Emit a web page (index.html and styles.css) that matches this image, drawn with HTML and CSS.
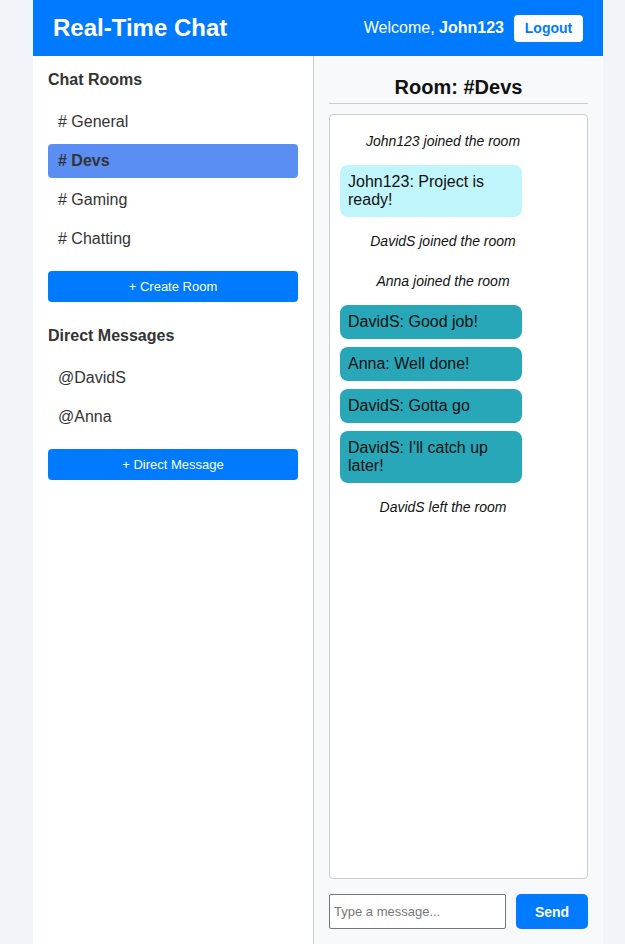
FILE: index.html
```html
<!DOCTYPE html>
<html lang="en">
<head>
<meta charset="utf-8">
<title>Real-Time Chat</title>
<link rel="stylesheet" href="styles.css">
</head>
<body>
<div class="app">
  <header class="topbar">
    <h1 class="brand">Real-Time Chat</h1>
    <div class="user">
      <span class="welcome">Welcome, <strong>John123</strong></span>
      <button class="logout">Logout</button>
    </div>
  </header>
  <div class="main">
    <aside class="sidebar">
      <h3 class="side-title">Chat Rooms</h3>
      <ul class="list">
        <li class="item"># General</li>
        <li class="item active"># Devs</li>
        <li class="item"># Gaming</li>
        <li class="item"># Chatting</li>
      </ul>
      <button class="side-btn">+ Create Room</button>
      <h3 class="side-title dm-title">Direct Messages</h3>
      <ul class="list">
        <li class="item">@DavidS</li>
        <li class="item">@Anna</li>
      </ul>
      <button class="side-btn">+ Direct Message</button>
    </aside>
    <section class="chat">
      <h2 class="room-title">Room: #Devs</h2>
      <div class="messages">
        <div class="sys">John123 joined the room</div>
        <div class="bubble own">John123: Project is ready!</div>
        <div class="sys">DavidS joined the room</div>
        <div class="sys">Anna joined the room</div>
        <div class="bubble other">DavidS: Good job!</div>
        <div class="bubble other">Anna: Well done!</div>
        <div class="bubble other">DavidS: Gotta go</div>
        <div class="bubble other">DavidS: I'll catch up later!</div>
        <div class="sys">DavidS left the room</div>
      </div>
      <form class="composer">
        <input class="msg-input" type="text" placeholder="Type a message...">
        <button class="send" type="button">Send</button>
      </form>
    </section>
  </div>
</div>
</body>
</html>
```

FILE: styles.css
```css
* { box-sizing: border-box; }
html, body { margin: 0; padding: 0; }
body {
  background: #f1f5f9;
  font-family: "Liberation Sans", Arial, sans-serif;
  color: #333;
  height: 944px;
  overflow: hidden;
}
.app {
  width: 570px;
  margin-left: 33px;
  height: 944px;
  display: flex;
  flex-direction: column;
}
.topbar {
  background: #007bff;
  height: 56px;
  flex: none;
  display: flex;
  align-items: center;
  justify-content: space-between;
  padding: 0 20px;
  color: #fff;
}
.brand {
  margin: 0;
  font-size: 24px;
  font-weight: bold;
}
.user {
  display: flex;
  align-items: center;
  gap: 10px;
}
.welcome { font-size: 16px; }
.logout {
  background: #fff;
  color: #007bff;
  border: none;
  border-radius: 4px;
  font-family: inherit;
  font-size: 14px;
  font-weight: bold;
  height: 27px;
  width: 69px;
  padding: 0;
}
.main {
  flex: 1;
  display: flex;
  min-height: 0;
}
.sidebar {
  width: 281px;
  flex: none;
  background: #fff;
  border-right: 1px solid #ccc;
  padding: 15px;
}
.side-title {
  margin: 0 0 16px;
  font-size: 16px;
  line-height: 18px;
  font-weight: bold;
  color: #333;
}
.dm-title { margin-top: 25px; }
.list {
  list-style: none;
  margin: 0;
  padding: 0;
}
.item {
  font-size: 16px;
  line-height: 18px;
  padding: 8px 10px;
  margin-bottom: 5px;
  border-radius: 4px;
  color: #333;
}
.item.active {
  background: #5b8ef3;
  font-weight: bold;
}
.side-btn {
  display: block;
  width: 100%;
  height: 31px;
  margin-top: 15px;
  background: #007bff;
  color: #fff;
  border: none;
  border-radius: 4px;
  font-family: inherit;
  font-size: 13px;
}
.chat {
  flex: 1;
  background: #f8f9fa;
  padding: 15px;
  display: flex;
  flex-direction: column;
  min-width: 0;
}
.room-title {
  margin: 5px 0 10px;
  padding-bottom: 4px;
  border-bottom: 1px solid #ccc;
  text-align: center;
  font-size: 20px;
  line-height: 23px;
  font-weight: bold;
  color: #111;
}
.messages {
  flex: 1;
  background: #fff;
  border: 1px solid #ccc;
  border-radius: 4px;
  padding: 10px;
  display: flex;
  flex-direction: column;
  gap: 8px;
  min-height: 0;
}
.sys {
  font-style: italic;
  font-size: 14px;
  line-height: 16px;
  padding: 8px 0;
  text-align: center;
  width: 206px;
  color: #111;
}
.bubble {
  width: 182px;
  padding: 8px;
  border-radius: 8px;
  font-size: 16px;
  line-height: 18px;
  color: #111;
}
.own { background: #c0f5fc; }
.other { background: #27a7b8; }
.composer {
  flex: none;
  margin: 15px 0 0;
  display: flex;
  gap: 10px;
}
.msg-input {
  width: 177px;
  height: 35px;
  border: 1px solid #767676;
  border-radius: 2px;
  padding: 0 4px;
  font-family: inherit;
  font-size: 13px;
  color: #333;
  background: #fff;
}
.msg-input::placeholder { color: #777; }
.send {
  width: 72px;
  height: 35px;
  background: #007bff;
  color: #fff;
  border: none;
  border-radius: 5px;
  font-family: inherit;
  font-size: 14px;
  font-weight: bold;
}
```
